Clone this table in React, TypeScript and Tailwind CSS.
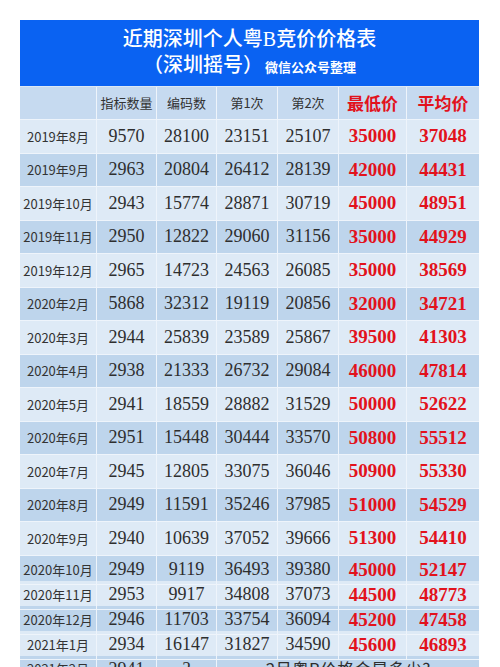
const rows: [string, string, string, string, string, string, string][] = [
  ['2019年8月', '9570', '28100', '23151', '25107', '35000', '37048'],
  ['2019年9月', '2963', '20804', '26412', '28139', '42000', '44431'],
  ['2019年10月', '2943', '15774', '28871', '30719', '45000', '48951'],
  ['2019年11月', '2950', '12822', '29060', '31156', '35000', '44929'],
  ['2019年12月', '2965', '14723', '24563', '26085', '35000', '38569'],
  ['2020年2月', '5868', '32312', '19119', '20856', '32000', '34721'],
  ['2020年3月', '2944', '25839', '23589', '25867', '39500', '41303'],
  ['2020年4月', '2938', '21333', '26732', '29084', '46000', '47814'],
  ['2020年5月', '2941', '18559', '28882', '31529', '50000', '52622'],
  ['2020年6月', '2951', '15448', '30444', '33570', '50800', '55512'],
  ['2020年7月', '2945', '12805', '33075', '36046', '50900', '55330'],
  ['2020年8月', '2949', '11591', '35246', '37985', '51000', '54529'],
  ['2020年9月', '2940', '10639', '37052', '39666', '51300', '54410'],
  ['2020年10月', '2949', '9119', '36493', '39380', '45000', '52147'],
  ['2020年11月', '2953', '9917', '34808', '37073', '44500', '48773'],
  ['2020年12月', '2946', '11703', '33754', '36094', '45200', '47458'],
  ['2021年1月', '2934', '16147', '31827', '34590', '45600', '46893'],
];

const cols = 'grid grid-cols-[77px_60px_60px_61px_61px_68px_72px]';
const cell = 'flex items-center justify-center border-r border-b border-[#eef4fb] last:border-r-0';
const num = "font-['Liberation_Serif','Noto_Sans_CJK_SC',serif] text-[18px] text-[#2e2e2e]";
const red = "font-['Liberation_Serif','Noto_Sans_CJK_SC',serif] text-[19px] font-bold text-[#e2121c]";
const sans = "font-['Noto_Sans_CJK_SC',sans-serif] text-[13px] text-[#333]";

export default function App() {
  return (
    <div className="min-h-[667px] overflow-hidden bg-white pt-[20px] pl-[20px]">
      <div className="w-[459px]">
        <div className="flex h-[66px] flex-col items-center justify-center bg-[#0a62f2] text-white font-['Liberation_Serif','Noto_Sans_CJK_SC',serif]">
          <div className="text-[20px] font-medium leading-[26px]">近期深圳个人粤B竞价价格表</div>
          <div className="flex items-baseline leading-[26px]">
            <span className="text-[20px] font-medium">（深圳摇号）</span>
            <span className="ml-[2px] text-[13px] font-bold font-['Noto_Sans_CJK_SC',sans-serif]">微信公众号整理</span>
          </div>
        </div>

        <div className={`${cols} h-[34px] bg-[#c6daf0] border-t border-[#dce8f5]`}>
          <div className={cell}></div>
          <div className={`${cell} ${sans}`}>指标数量</div>
          <div className={`${cell} ${sans}`}>编码数</div>
          <div className={`${cell} ${sans}`}>第1次</div>
          <div className={`${cell} ${sans}`}>第2次</div>
          <div className={`${cell} font-['Noto_Sans_CJK_SC',sans-serif] text-[17px] font-bold text-[#e2121c]`}>最低价</div>
          <div className={`${cell} font-['Noto_Sans_CJK_SC',sans-serif] text-[17px] font-bold text-[#e2121c]`}>平均价</div>
        </div>

        {rows.map((r, i) => (
          <div
            key={r[0]}
            className={`${cols} ${i < 13 ? 'h-[33.5px]' : 'h-[25px]'} ${i % 2 === 0 ? 'bg-[#deeaf6]' : 'bg-[#bed5ec]'}`}
          >
            <div className={`${cell} ${sans}`}>{r[0]}</div>
            <div className={`${cell} ${num}`}>{r[1]}</div>
            <div className={`${cell} ${num}`}>{r[2]}</div>
            <div className={`${cell} ${num}`}>{r[3]}</div>
            <div className={`${cell} ${num}`}>{r[4]}</div>
            <div className={`${cell} ${red}`}>{r[5]}</div>
            <div className={`${cell} ${red}`}>{r[6]}</div>
          </div>
        ))}

        <div className={`${cols} h-[25px] bg-[#bed5ec]`}>
          <div className={`${cell} ${sans}`}>2021年2月</div>
          <div className={`${cell} ${num}`}>2941</div>
          <div className={`${cell} ${num}`}>?</div>
          <div className={`${cell} col-span-4 border-r-0 font-['Noto_Sans_CJK_SC',sans-serif] text-[17px] text-[#2e2e2e]`}>
            2月粤B价格会是多少?
          </div>
        </div>
      </div>
    </div>
  );
}
